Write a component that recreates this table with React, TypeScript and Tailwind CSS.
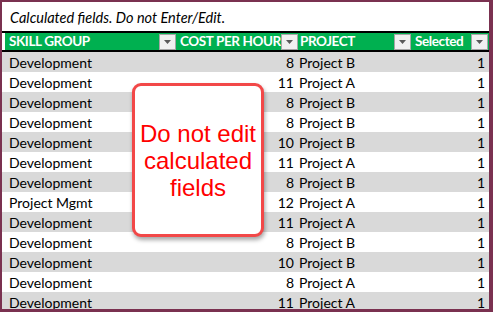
import React from 'react';

type Row = { group: string; cost: number; project: string; selected: number };

const rows: Row[] = [
  { group: 'Development', cost: 8, project: 'Project B', selected: 1 },
  { group: 'Development', cost: 11, project: 'Project A', selected: 1 },
  { group: 'Development', cost: 8, project: 'Project B', selected: 1 },
  { group: 'Development', cost: 8, project: 'Project B', selected: 1 },
  { group: 'Development', cost: 10, project: 'Project B', selected: 1 },
  { group: 'Development', cost: 11, project: 'Project A', selected: 1 },
  { group: 'Development', cost: 8, project: 'Project B', selected: 1 },
  { group: 'Project Mgmt', cost: 12, project: 'Project A', selected: 1 },
  { group: 'Development', cost: 11, project: 'Project A', selected: 1 },
  { group: 'Development', cost: 8, project: 'Project B', selected: 1 },
  { group: 'Development', cost: 10, project: 'Project B', selected: 1 },
  { group: 'Development', cost: 8, project: 'Project A', selected: 1 },
  { group: 'Development', cost: 11, project: 'Project A', selected: 1 },
];

// filter dropdown button in the header cells
const FilterButton = () => (
  <div className="w-[17px] h-[16px] shrink-0 bg-[#f0f0f0] border border-[#a6a6a6] flex items-center justify-center">
    <svg width="7" height="4" viewBox="0 0 7 4">
      <path d="M0 0h7L3.5 4z" fill="#595959" />
    </svg>
  </div>
);

const HeaderCell = ({ label, className }: { label: string; className: string }) => (
  <div className={`flex items-center justify-between pl-[4px] ${className}`}>
    <span className="font-bold text-white text-[13.5px] leading-none whitespace-nowrap tracking-[-0.4px]">{label}</span>
    <FilterButton />
  </div>
);

export default function App() {
  return (
    <div className="w-[493px] h-[312px] bg-[#7a3150] pl-[2px] pt-[2px] pr-[4px] pb-[3px] overflow-hidden">
      <div
        className="relative w-full h-full bg-white overflow-hidden text-[14px] text-black"
        style={{ fontFamily: 'Lato, "Liberation Sans", sans-serif' }}
      >
        <div className="h-[29px] flex items-end pb-[2px] pl-[8px] italic text-[14.5px]">
          Calculated fields. Do not Enter/Edit.
        </div>

        {/* table header */}
        <div className="border-y-2 border-black h-[21px] w-[487px] pl-[3px] flex">
          <div className="flex flex-1 bg-[#00b050]">
            <HeaderCell label="SKILL GROUP" className="w-[171px]" />
            <HeaderCell label="COST PER HOUR" className="w-[120px]" />
            <HeaderCell label="PROJECT" className="w-[115px]" />
            <HeaderCell label="Selected" className="w-[77px]" />
          </div>
        </div>

        {/* table body */}
        <div className="w-[487px]">
          {rows.map((r, i) => (
            <div key={i} className={`h-[20px] flex items-center ${i % 2 === 0 ? 'bg-[#d9d9d9]' : 'bg-white'}`}>
              <div className="w-[174px] pl-[7px]">{r.group}</div>
              <div className="w-[118px] text-right">{r.cost}</div>
              <div className="w-[115px] pl-[5px]">{r.project}</div>
              <div className="w-[77px] text-right pr-[1px]">{r.selected}</div>
            </div>
          ))}
        </div>

        {/* callout over the calculated columns */}
        <div className="absolute left-[130px] top-[81px] w-[132px] h-[154px] bg-white border-[3px] border-[#f24848] rounded-[9px] shadow-[1px_3px_4px_rgba(0,0,0,0.35)] flex items-center justify-center">
          <p
            className="text-[24px] leading-[27px] text-[#ff0000] text-center"
            style={{ fontFamily: '"Liberation Sans", Arial, sans-serif' }}
          >
            Do not edit
            <br />
            calculated
            <br />
            fields
          </p>
        </div>
      </div>
    </div>
  );
}
